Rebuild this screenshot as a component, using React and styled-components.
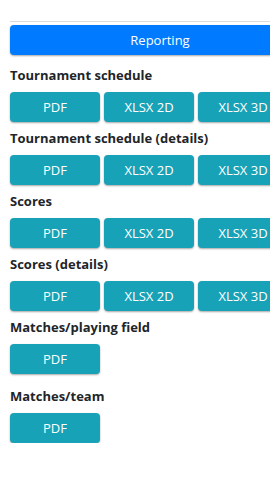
import React from "react";
import styled, { createGlobalStyle } from "styled-components";

const Global = createGlobalStyle`
  html, body {
    margin: 0;
    padding: 0;
    background: #ffffff;
    overflow: hidden;
  }
  body {
    font-family: "Open Sans", "Noto Sans", sans-serif;
    color: #212529;
  }
`;

const Page = styled.div`
  width: 300px;
  padding: 21px 0 0 10px;
`;

const Divider = styled.hr`
  margin: 0 0 3px;
  border: 0;
  border-top: 1px solid #dcdcdc;
`;

const PrimaryButton = styled.button`
  display: block;
  width: 100%;
  height: 30px;
  border: 0;
  border-radius: 4px;
  background: #007bff;
  color: #ffffff;
  font-family: inherit;
  font-size: 13px;
  box-shadow: 0 1px 2px rgba(0, 0, 0, 0.35);
  padding: 0;
`;

const Section = styled.section`
  margin-top: ${(p) => (p.$first ? "10px" : p.$spaced ? "12px" : "6px")};
`;

const Title = styled.h4`
  margin: 0 0 6px;
  font-size: 13px;
  font-weight: 700;
  line-height: 21px;
  color: #212529;
`;

const Row = styled.div`
  display: flex;
  gap: 4px;
`;

const InfoButton = styled.button`
  flex: 0 0 90px;
  height: 30px;
  border: 0;
  border-radius: 4px;
  background: #17a2b8;
  color: #ffffff;
  font-family: inherit;
  font-size: 13px;
  box-shadow: 0 1px 2px rgba(0, 0, 0, 0.35);
  padding: 0;
  white-space: nowrap;
`;

const sections = [
  { title: "Tournament schedule", buttons: ["PDF", "XLSX 2D", "XLSX 3D"] },
  { title: "Tournament schedule (details)", buttons: ["PDF", "XLSX 2D", "XLSX 3D"] },
  { title: "Scores", buttons: ["PDF", "XLSX 2D", "XLSX 3D"] },
  { title: "Scores (details)", buttons: ["PDF", "XLSX 2D", "XLSX 3D"] },
  { title: "Matches/playing field", buttons: ["PDF"] },
  { title: "Matches/team", buttons: ["PDF"] },
];

export default function App() {
  return (
    <>
      <Global />
      <Page>
        <Divider />
        <PrimaryButton>Reporting</PrimaryButton>
        {sections.map((s, i) => (
          <Section
            key={s.title}
            $first={i === 0}
            $spaced={i > 0 && sections[i - 1].buttons.length === 1}
          >
            <Title>{s.title}</Title>
            <Row>
              {s.buttons.map((b) => (
                <InfoButton key={b}>{b}</InfoButton>
              ))}
            </Row>
          </Section>
        ))}
      </Page>
    </>
  );
}
